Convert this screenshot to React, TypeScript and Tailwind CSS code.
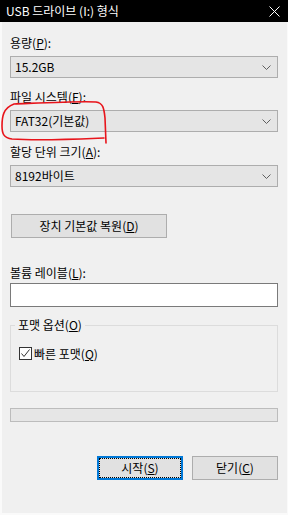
import React from 'react';

const font = { fontFamily: '"Noto Sans CJK KR", "Noto Sans", sans-serif' };

const Mn: React.FC<{ children: React.ReactNode }> = ({ children }) => (
  <span className="underline underline-offset-[1px] decoration-1">{children}</span>
);

const Chevron = () => (
  <svg width="9" height="5" viewBox="0 0 9 5" className="shrink-0">
    <path d="M0.5 0.5 L4.5 4.5 L8.5 0.5" fill="none" stroke="#5f5f5f" strokeWidth="1" />
  </svg>
);

const Combo: React.FC<{ value: string }> = ({ value }) => (
  <div className="h-[22px] flex items-center justify-between border border-[#adadad] bg-[#e5e5e5] pl-[4px] pr-[6px] leading-[20px]">
    <span>{value}</span>
    <Chevron />
  </div>
);

const Label: React.FC<{ children: React.ReactNode }> = ({ children }) => (
  <div className="h-[16px] leading-[16px] mb-[5px]">{children}</div>
);

export default function App() {
  return (
    <div className="relative w-[288px] h-[515px] bg-[#fafafa] text-[12px] text-black overflow-hidden" style={font}>
      <div className="h-[22px] bg-black text-white flex items-center justify-between pl-[6px] pr-[8px] leading-[16px]">
        <span>USB 드라이브 (I:) 형식</span>
        <svg width="11" height="11" viewBox="0 0 11 11">
          <path d="M0.5 0.5 L10.5 10.5 M10.5 0.5 L0.5 10.5" stroke="#fff" strokeWidth="1" />
        </svg>
      </div>

      <div className="ml-[2px] mr-[1px] h-[491px] bg-[#f0f0f0] pl-[8px] pr-[9px] pt-[13px] flex flex-col">
        <Label>용량(<Mn>P</Mn>):</Label>
        <Combo value="15.2GB" />

        <div className="mt-[11px]">
          <Label>파일 시스템(<Mn>F</Mn>):</Label>
          <Combo value="FAT32(기본값)" />
        </div>

        <div className="mt-[12px]">
          <Label>할당 단위 크기(<Mn>A</Mn>):</Label>
          <Combo value="8192바이트" />
        </div>

        <button className="mt-[27px] ml-[1px] w-[156px] h-[24px] border border-[#adadad] bg-[#e1e1e1] leading-[20px]">
          장치 기본값 복원(<Mn>D</Mn>)
        </button>

        <div className="mt-[27px] h-[16px] leading-[16px] mb-[2px]">
          볼륨 레이블(<Mn>L</Mn>):
        </div>
        <div className="h-[24px] border border-[#7a7a7a] bg-white" />

        <fieldset className="mt-[10px] h-[75px] border border-[#dcdcdc] px-[4px]">
          <legend className="px-[3px] leading-[16px]">
            포맷 옵션(<Mn>O</Mn>)
          </legend>
          <div className="mt-[13px] ml-[4px] flex items-center gap-[2px] leading-[15px]">
            <span className="w-[13px] h-[13px] border border-[#333] bg-white flex items-center justify-center">
              <svg width="11" height="11" viewBox="0 0 11 11">
                <path d="M1.5 5.5 L4 8.5 L9.5 1.5" fill="none" stroke="#333" strokeWidth="1" />
              </svg>
            </span>
            <span>빠른 포맷(<Mn>Q</Mn>)</span>
          </div>
        </fieldset>

        <div className="mt-[16px] h-[14px] border border-[#bcbcbc] bg-[#e6e6e6]" />

        <div className="mt-[34px] flex justify-end gap-[9px]">
          <button className="relative w-[86px] h-[24px] border-2 border-[#0078d7] bg-[#e1e1e1] leading-[20px]">
            <span className="absolute inset-0 border border-dotted border-black" />
            시작(<Mn>S</Mn>)
          </button>
          <button className="w-[86px] h-[24px] border border-[#adadad] bg-[#e1e1e1] leading-[22px]">
            닫기(<Mn>C</Mn>)
          </button>
        </div>
      </div>

      <svg className="absolute left-0 top-0 pointer-events-none" width="288" height="515">
        <path
          d="M14 104 C40 103 80 101 96 102 C103 103 104 108 105 118 L106 143 M104 138 C80 139 40 141 12 139 C4 138 2 134 2 126 C2 117 3 108 14 104"
          fill="none"
          stroke="#e8141b"
          strokeWidth="1.6"
          strokeLinecap="round"
        />
      </svg>
    </div>
  );
}
